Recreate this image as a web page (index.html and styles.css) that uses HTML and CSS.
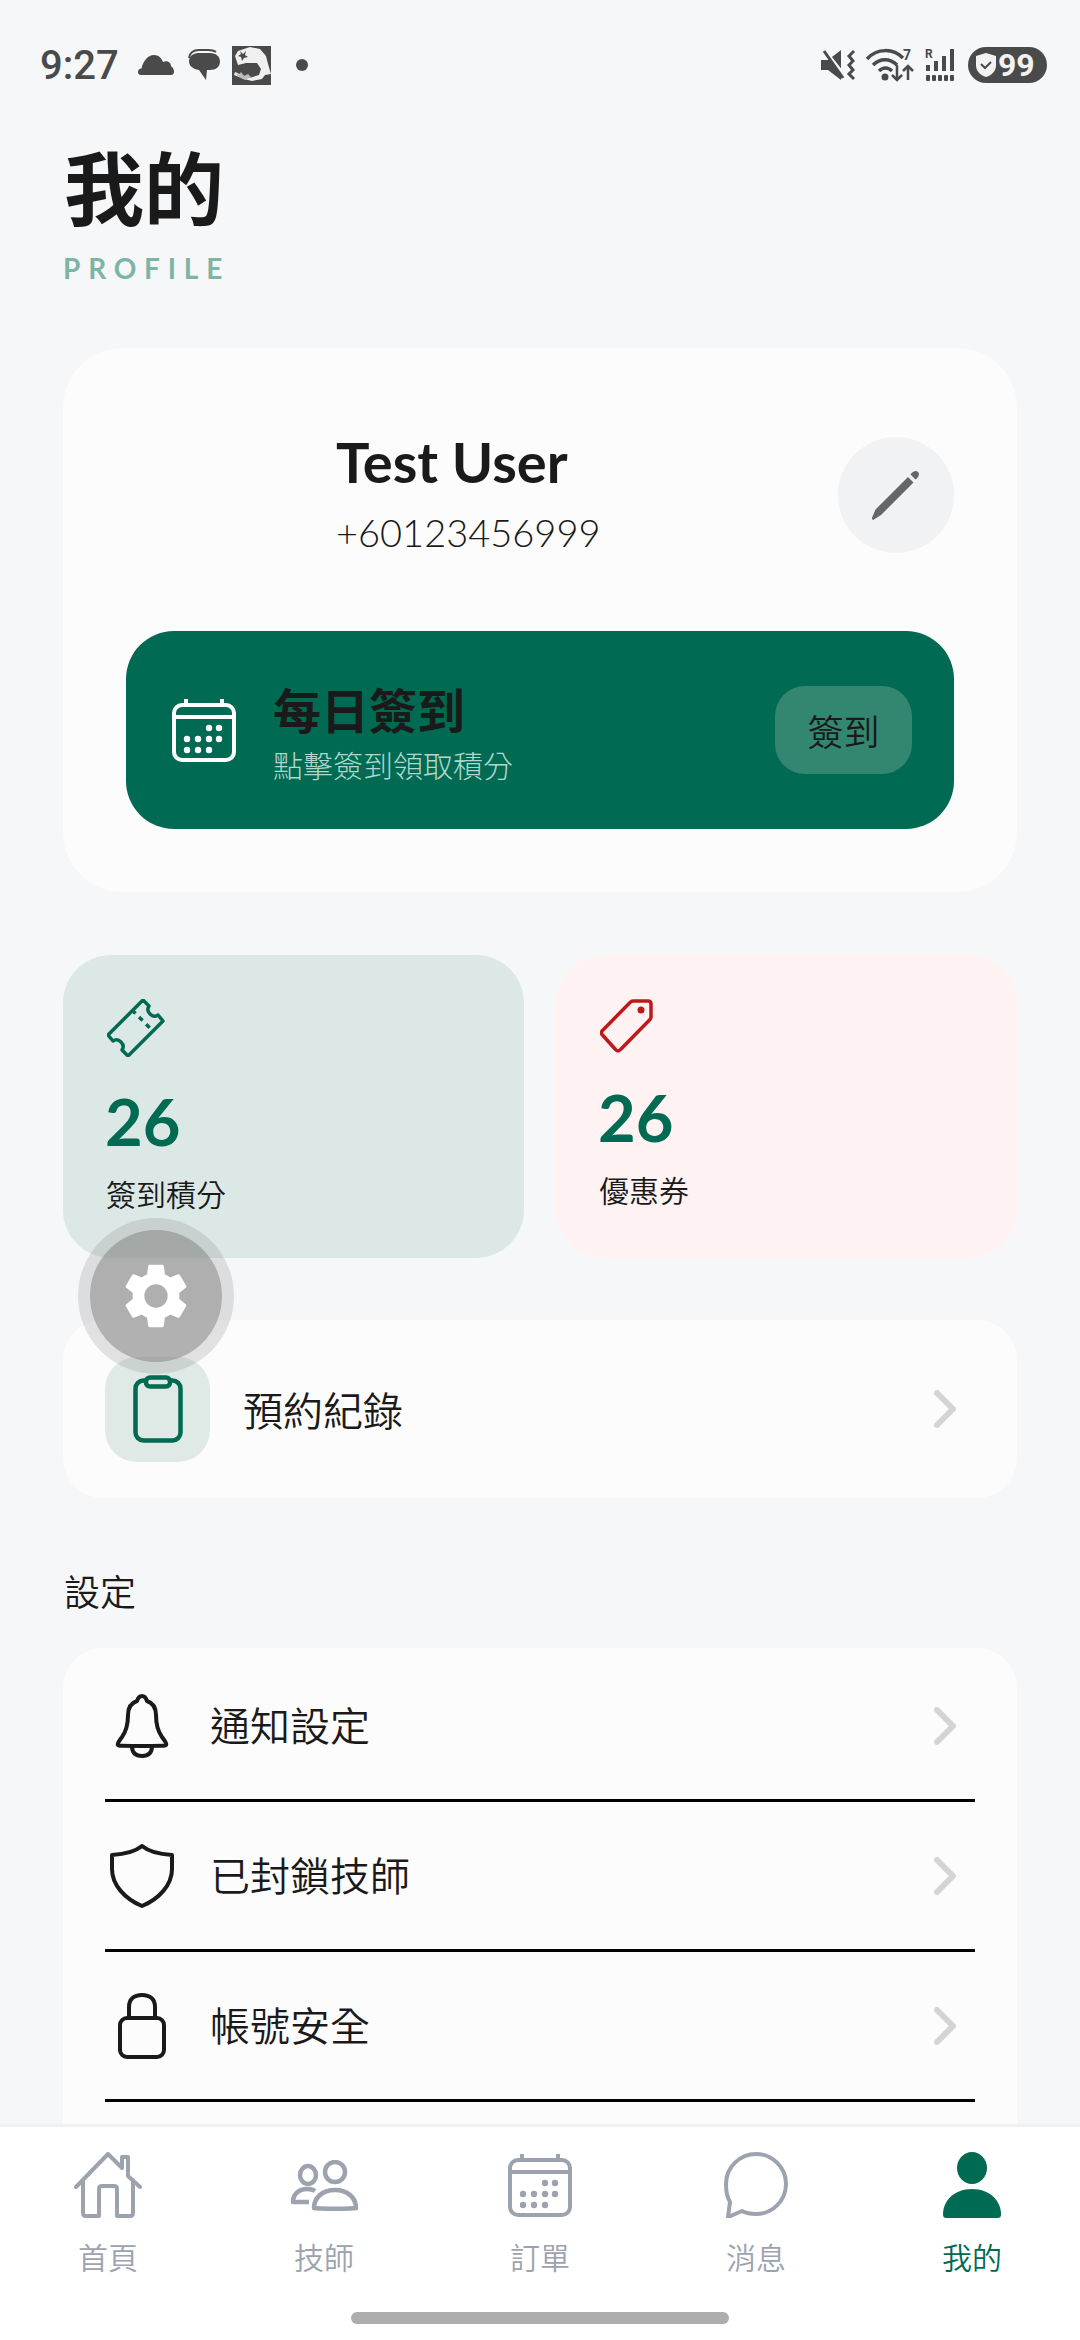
FILE: index.html
```html
<!DOCTYPE html>
<html lang="zh-Hant">
<head>
  <meta charset="UTF-8" />
  <meta name="viewport" content="width=device-width, initial-scale=1.0" />
  <title>我的</title>
  <link rel="stylesheet" href="styles.css">
</head>
<body>
  <div class="statusbar">
    <div class="status-left">
      <span class="time">9:27</span>
      <svg class="st-cloud" width="36" height="20" viewBox="0 0 36 20"><path fill="#4a4a4a" d="M3 20C1 20 0 18.600 0 17c0-2 1.500-3.400 3.500-3.400C5 6 10 0 16 0c4.500 0 7.500 2.800 9 7 1-.6 2-.8 3-.8 3 0 5 2.400 5.200 5.400C35 12.300 36 14.500 36 16.500 36 18.500 35 20 33 20z"/></svg>
      <svg class="st-chat" width="32" height="32" viewBox="0 0 32 32"><path fill="#4a4a4a" d="M10 4h12c6 0 10 3.500 10 8.500S28 21 22 21h-3l-1 10-7-10c-6-1-10-4-10-8.500C1 8 5 4 10 4z"/><path fill="none" stroke="#4a4a4a" stroke-width="2" d="M1 9C2 3 6 1 11 1h9c3 0 6 .5 8 2"/></svg>
      <svg class="st-pic" width="39" height="39" viewBox="0 0 39 39"><rect width="39" height="39" fill="#4a4a4a"/><path fill="#f0f0f0" d="M6 5 18 1l10 2 6 7 2 8 3 10-6 1-3 4-10 2-8-2-10-4 1-3 14 6 10-3 2-6-4-6H14l-8 2-3-9z"/><path fill="#4a4a4a" d="M8 5l3 3 3-3-1 4 3 2-4 1-2 3-1-4-3-1 3-2z"/><path fill="#bdbdbd" d="M4 26l3 3 2-3 3 4 4-2 3 3-6 3-8-4z"/></svg>
      <span class="st-dot"></span>
    </div>
    <div class="status-right">
      <svg width="35" height="32" viewBox="0 0 35 32"><path fill="#4a4a4a" d="M0 11h7L20 1v30L7 21H0z"/><path stroke="#f6f7f9" stroke-width="3" d="M2 -1 24 27"/><path stroke="#4a4a4a" stroke-width="3" d="M3 2l19 27"/><path fill="none" stroke="#4a4a4a" stroke-width="3" d="M33 2l-5 5 4 5-4 4 4 5-4 4 5 5"/></svg>
      <svg width="49" height="36" viewBox="0 0 49 36"><path fill="none" stroke="#4a4a4a" stroke-width="3.500" d="M1 12C11 1 27 1 37 11M7 18c7-7 17-7 24 0M13 24c4-4 9-4 13 0"/><circle cx="19" cy="30" r="3.500" fill="#4a4a4a"/><path fill="none" stroke="#4a4a4a" stroke-width="2.500" d="M31 18v15M26 28l5 5 5-5M42 33V19M37 24l5-5 5 5"/><text x="37" y="13" class="st-tiny">7</text></svg>
      <svg width="30" height="34" viewBox="0 0 30 34"><text x="0" y="10" class="st-r">R</text><g fill="#4a4a4a"><rect x="1" y="17" width="4" height="6"/><rect x="9" y="13" width="4" height="10"/><rect x="17" y="8" width="4" height="15"/><rect x="25" y="1" width="4" height="22"/><rect x="1" y="27" width="4" height="6" rx="1"/><rect x="7" y="27" width="4" height="6" rx="1"/><rect x="13" y="27" width="4" height="6" rx="1"/><rect x="19" y="27" width="4" height="6" rx="1"/><rect x="25" y="27" width="4" height="6" rx="1"/></g></svg>
      <div class="battery">
        <svg width="20" height="24" viewBox="0 0 20 24"><path fill="#f2f2f2" d="M10 0l10 3v9c0 6-4 10-10 12C4 22 0 18 0 12V3z"/><path fill="none" stroke="#4a4a4a" stroke-width="2" d="M5 11l4 4 6-6"/></svg>
        <span>99</span>
      </div>
    </div>
  </div>

  <div class="content">
    <h1 class="title">我的</h1>
    <div class="subtitle">PROFILE</div>

    <div class="card profile-card">
      <div class="profile-row">
        <div class="avatar"></div>
        <div class="profile-info">
          <div class="name">Test User</div>
          <div class="phone">+60123456999</div>
        </div>
        <div class="edit-btn">
          <svg width="52" height="52" viewBox="0 0 52 52"><path fill="#666" d="M2.500 50.500c-.6-.6-.6-1.300-.4-2l3.400-8L38 8l5.500 5.500L11 46l-7.500 4.800c-.4.200-.6 0-1-.3z"/><path fill="#666" d="M40.500 5.500c2-3 5.500-4.500 7.500-2.500s.5 5.500-2.500 7.500z"/></svg>
        </div>
      </div>
      <div class="checkin">
        <svg class="checkin-icon" width="64" height="64" viewBox="0 0 64 64"><use href="#cal-shape"/></svg>
        <div class="checkin-text">
          <div class="checkin-title">每日簽到</div>
          <div class="checkin-sub">點擊簽到領取積分</div>
        </div>
        <div class="checkin-btn">簽到</div>
      </div>
    </div>

    <div class="stats">
      <div class="stat stat-green">
        <svg width="58" height="58" viewBox="0 0 58 58"><path fill="none" stroke="#006a52" stroke-width="3.500" stroke-linejoin="round" d="M36 1l6 6c-2 3-1 6 1 8s5 3 8 1l5 6-35 35-6-6c2-3 1-6-1-8s-5-3-8-1l-5-6z"/><path fill="none" stroke="#006a52" stroke-width="3.500" stroke-dasharray="5 5" d="M25 11l19 19"/></svg>
        <div class="stat-num">26</div>
        <div class="stat-label">簽到積分</div>
      </div>
      <div class="stat stat-red">
        <svg width="54" height="54" viewBox="0 0 54 54"><path fill="none" stroke="#c01818" stroke-width="3.500" stroke-linejoin="round" d="M33 2h15c2 0 3 1 3 3v13c0 1-.3 1.500-1 2.500L21 50c-2 2.500-4 2.500-5.500.5L2.500 36c-1.500-1.500-1.500-3 0-4.500L30 3.500c1-1 2-1.500 3-1.500z"/><circle cx="41" cy="11" r="3.500" fill="#c01818"/></svg>
        <div class="stat-num">26</div>
        <div class="stat-label">優惠券</div>
      </div>
    </div>

    <div class="card booking-row">
      <div class="booking-icon">
        <svg width="50" height="68" viewBox="0 0 50 68"><rect x="2.500" y="5.500" width="45" height="60" rx="8" fill="none" stroke="#006a52" stroke-width="4.500"/><rect x="13" y="2.500" width="24" height="9" rx="4" fill="#dfeae7" stroke="#006a52" stroke-width="4.500"/></svg>
      </div>
      <div class="row-label booking-label">預約紀錄</div>
      <svg class="chevron" width="22" height="38" viewBox="0 0 22 38"><path fill="none" stroke="#d4d4d4" stroke-width="6" stroke-linecap="round" stroke-linejoin="round" d="M3 3l16 16L3 35"/></svg>
    </div>

    <div class="section-title">設定</div>

    <div class="card settings">
      <div class="setting-row">
        <div class="setting-icon">
          <svg width="54" height="64" viewBox="0 0 54 64"><path fill="none" stroke="#1a1a1a" stroke-width="4" stroke-linejoin="round" d="M27 2c3 0 4 2 5 5 6 2 9 7 9 14 0 8 1 15 6 22 3 4 5 7 4 8-1 1-3 1-24 1S4 52 3 51c-1-1 1-4 4-8 5-7 6-14 6-22 0-7 3-12 9-14 1-3 2-5 5-5z"/><path fill="none" stroke="#1a1a1a" stroke-width="4" d="M17 52c0 7 4 10 10 10s10-3 10-10"/></svg>
        </div>
        <div class="row-label">通知設定</div>
        <svg class="chevron" width="22" height="38" viewBox="0 0 22 38"><path fill="none" stroke="#d4d4d4" stroke-width="6" stroke-linecap="round" stroke-linejoin="round" d="M3 3l16 16L3 35"/></svg>
      </div>
      <div class="setting-row">
        <div class="setting-icon">
          <svg width="64" height="64" viewBox="0 0 64 64"><path fill="none" stroke="#1a1a1a" stroke-width="4" stroke-linejoin="round" d="M32 2c6 5 15 8 30 9v14c0 16-13 30-30 37C15 55 2 41 2 25V11c15-1 24-4 30-9z"/></svg>
        </div>
        <div class="row-label">已封鎖技師</div>
        <svg class="chevron" width="22" height="38" viewBox="0 0 22 38"><path fill="none" stroke="#d4d4d4" stroke-width="6" stroke-linecap="round" stroke-linejoin="round" d="M3 3l16 16L3 35"/></svg>
      </div>
      <div class="setting-row">
        <div class="setting-icon">
          <svg width="48" height="66" viewBox="0 0 48 66"><rect x="2" y="25" width="44" height="39" rx="7" fill="none" stroke="#1a1a1a" stroke-width="4"/><path fill="none" stroke="#1a1a1a" stroke-width="4" d="M11 25V14C11 6 16 2 24 2s13 4 13 12v11"/></svg>
        </div>
        <div class="row-label">帳號安全</div>
        <svg class="chevron" width="22" height="38" viewBox="0 0 22 38"><path fill="none" stroke="#d4d4d4" stroke-width="6" stroke-linecap="round" stroke-linejoin="round" d="M3 3l16 16L3 35"/></svg>
      </div>
    </div>
  </div>

  <div class="float-btn">
    <div class="float-inner">
      <svg width="78" height="80" viewBox="0 0 24 24"><path fill="#fff" fill-rule="evenodd" d="M19.140 12.940c.040-.300.060-.610.060-.940 0-.320-.020-.640-.070-.940l2.030-1.580a.490.490 0 0 0 .120-.610l-1.920-3.320a.488.488 0 0 0-.590-.220l-2.390.960c-.500-.380-1.030-.700-1.620-.940l-.360-2.540a.484.484 0 0 0-.480-.410h-3.840c-.240 0-.430.170-.470.410l-.360 2.540c-.590.240-1.130.570-1.620.940l-2.390-.960c-.220-.080-.470 0-.590.220L2.740 8.870c-.120.210-.080.470.120.610l2.030 1.580c-.050.300-.090.630-.090.940s.020.640.070.940l-2.030 1.580a.490.490 0 0 0-.120.610l1.920 3.320c.120.220.370.290.590.220l2.390-.960c.500.380 1.030.700 1.620.940l.360 2.540c.050.240.240.410.480.410h3.840c.240 0 .440-.170.470-.410l.360-2.540c.590-.240 1.130-.560 1.620-.940l2.390.960c.220.080.470 0 .590-.220l1.920-3.320c.120-.220.070-.470-.120-.610l-2.010-1.580zM12 15.600A3.600 3.600 0 1 1 12 8.400a3.600 3.600 0 0 1 0 7.200z"/></svg>
    </div>
  </div>

  <div class="tabbar">
    <div class="tab">
      <svg width="68" height="66" viewBox="0 0 68 66"><path fill="none" stroke="#9ca3af" stroke-width="4" stroke-linejoin="round" stroke-linecap="round" d="M2 35L34 2l14 14V5h6v19l12 11M9 28v33c0 2 1 3 3 3h13V37c0-2 1-3 3-3h12c2 0 3 1 3 3v27h13c2 0 3-1 3-3V28"/></svg>
      <span>首頁</span>
    </div>
    <div class="tab">
      <svg class="people" width="68" height="52" viewBox="0 0 68 52"><ellipse cx="18" cy="15" rx="8" ry="9" fill="none" stroke="#9ca3af" stroke-width="4.500"/><ellipse cx="45" cy="12" rx="10" ry="10" fill="none" stroke="#9ca3af" stroke-width="4.500"/><path fill="none" stroke="#9ca3af" stroke-width="4.500" stroke-linejoin="round" d="M19 42H3c0-8 6-13 14-13 3 0 6 .5 8 2"/><path fill="none" stroke="#9ca3af" stroke-width="4.500" stroke-linejoin="round" d="M24 48c0-10 8-18 21-18s21 8 21 18c-4 1-38 1-42 0z"/></svg>
      <span>技師</span>
    </div>
    <div class="tab">
      <svg width="64" height="66" viewBox="0 0 64 64"><use href="#cal-gray"/></svg>
      <span>訂單</span>
    </div>
    <div class="tab">
      <svg width="64" height="66" viewBox="0 0 64 66"><path fill="none" stroke="#9ca3af" stroke-width="4" stroke-linejoin="round" d="M32 2c16 0 30 13 30 30S48 62 32 62c-6 0-10-1-14-3L4 65l2-15C3 45 2 39 2 32 2 15 16 2 32 2z"/></svg>
      <span>消息</span>
    </div>
    <div class="tab tab-active">
      <svg width="58" height="66" viewBox="0 0 58 66"><ellipse cx="29" cy="16" rx="15" ry="16" fill="#006a52"/><path fill="#006a52" d="M0 62C0 50 10 37 29 37s29 13 29 25c0 3-1 4-4 4H4c-3 0-4-1-4-4z"/></svg>
      <span>我的</span>
    </div>
    <div class="home-bar"></div>
  </div>

  <svg class="defs" width="0" height="0">
    <defs>
      <g id="cal-shape" fill="none" stroke="#fff" stroke-width="4">
        <rect x="2" y="7" width="60" height="55" rx="8"/>
        <path d="M2 19h60M14 1v6M50 1v6"/>
        <g fill="#fff" stroke="none">
          <circle cx="37" cy="30" r="3.200"/><circle cx="47" cy="30" r="3.200"/>
          <circle cx="15" cy="41" r="3.200"/><circle cx="26" cy="41" r="3.200"/><circle cx="37" cy="41" r="3.200"/><circle cx="47" cy="41" r="3.200"/>
          <circle cx="15" cy="52" r="3.200"/><circle cx="26" cy="52" r="3.200"/><circle cx="37" cy="52" r="3.200"/>
        </g>
      </g>
      <g id="cal-gray" fill="none" stroke="#9ca3af" stroke-width="4">
        <rect x="2" y="7" width="60" height="55" rx="8"/>
        <path d="M2 19h60M14 1v6M50 1v6"/>
        <g fill="#9ca3af" stroke="none">
          <circle cx="37" cy="30" r="3.200"/><circle cx="47" cy="30" r="3.200"/>
          <circle cx="15" cy="41" r="3.200"/><circle cx="26" cy="41" r="3.200"/><circle cx="37" cy="41" r="3.200"/><circle cx="47" cy="41" r="3.200"/>
          <circle cx="15" cy="52" r="3.200"/><circle cx="26" cy="52" r="3.200"/><circle cx="37" cy="52" r="3.200"/>
        </g>
      </g>
    </defs>
  </svg>
</body>
</html>
```

FILE: styles.css
```css
* {
  box-sizing: border-box;
}
html, body {
  margin: 0;
  padding: 0;
}
body {
  position: relative;
  width: 1080px;
  height: 2340px;
  overflow: hidden;
  display: flex;
  flex-direction: column;
  background-color: #f6f7f9;
  color: #1a1a1a;
  font-family: Lato, "Noto Sans CJK TC", sans-serif;
}
.defs {
  position: absolute;
}

/* status bar */
.statusbar {
  height: 130px;
  flex: none;
  padding: 0 33px 0 40px;
  display: flex;
  align-items: center;
  justify-content: space-between;
}
.status-left,
.status-right {
  display: flex;
  align-items: center;
}
.status-right {
  gap: 10px;
}
.time {
  font-family: Roboto, sans-serif;
  font-size: 40px;
  font-weight: 500;
  color: #4a4a4a;
}
.st-cloud {
  margin-left: 19px;
}
.st-chat {
  margin-left: 14px;
}
.st-pic {
  margin-left: 12px;
}
.st-dot {
  width: 12px;
  height: 12px;
  margin-left: 25px;
  border-radius: 50%;
  background-color: #4a4a4a;
}
.st-tiny {
  font-family: Roboto, sans-serif;
  font-size: 14px;
  font-weight: 700;
  fill: #4a4a4a;
}
.st-r {
  font-family: Roboto, sans-serif;
  font-size: 12px;
  font-weight: 700;
  fill: #4a4a4a;
}
.battery {
  width: 79px;
  height: 36px;
  margin-left: 3px;
  padding-left: 8px;
  border-radius: 18px;
  background-color: #4a4a4a;
  display: flex;
  align-items: center;
  gap: 2px;
  color: #f2f2f2;
  font-family: Roboto, sans-serif;
  font-size: 32px;
  font-weight: 700;
}

/* page */
.content {
  flex: 1;
  min-height: 0;
  overflow: hidden;
  padding: 0 63px;
}
.title {
  margin: 12px 0 0 1px;
  font-size: 80px;
  font-weight: 700;
  line-height: 92px;
}
.subtitle {
  margin-top: 17px;
  color: #7db5a5;
  font-size: 28px;
  font-weight: 700;
  line-height: 34px;
  letter-spacing: 7.8px;
}
.card {
  background-color: #fcfcfc;
}
.profile-card {
  margin-top: 63px;
  padding: 63px;
  border-radius: 60px;
}
.profile-row {
  display: flex;
  align-items: center;
}
.avatar {
  width: 168px;
  height: 168px;
  margin-right: 42px;
}
.profile-info {
  flex: 1;
  padding-bottom: 4px;
}
.name {
  font-size: 56px;
  font-weight: 700;
  line-height: 66px;
}
.phone {
  margin-top: 12px;
  font-size: 38px;
  font-weight: 300;
  line-height: 50px;
}
.edit-btn {
  width: 116px;
  height: 116px;
  border-radius: 50%;
  background-color: #f1f2f4;
  display: flex;
  align-items: center;
  justify-content: center;
}
.checkin {
  height: 198px;
  margin-top: 52px;
  padding: 0 42px 0 46px;
  border-radius: 48px;
  background-color: #006a52;
  display: flex;
  align-items: center;
}
.checkin-icon {
  flex: none;
}
.checkin-text {
  flex: 1;
  margin-left: 37px;
  padding-top: 7px;
}
.checkin-title {
  font-size: 48px;
  font-weight: 700;
  line-height: 56px;
}
.checkin-sub {
  margin-top: 7px;
  color: #b0d8cc;
  font-size: 30px;
  font-weight: 300;
  line-height: 38px;
}
.checkin-btn {
  width: 137px;
  height: 88px;
  border-radius: 30px;
  background-color: #338770;
  display: flex;
  align-items: center;
  justify-content: center;
  font-size: 36px;
  font-weight: 350;
}

/* points and coupons */
.stats {
  margin-top: 63px;
  display: flex;
  gap: 32px;
}
.stat {
  flex: 1;
  height: 303px;
  padding: 44px;
  border-radius: 48px;
}
.stat svg {
  display: block;
}
.stat-num {
  margin-top: 23px;
  margin-left: -2px;
  color: #006a52;
  font-size: 65px;
  font-weight: 700;
  line-height: 82px;
}
.stat-green {
  background-color: #dce8e5;
}
.stat-red {
  background-color: #fff2f2;
}
.stat-label {
  margin-top: 12px;
  margin-left: -1px;
  font-size: 30px;
  font-weight: 350;
  line-height: 40px;
}

/* rows */
.booking-row {
  height: 178px;
  margin-top: 62px;
  padding: 0 61px 0 42px;
  border-radius: 40px;
  display: flex;
  align-items: center;
}
.booking-icon {
  width: 105px;
  height: 105px;
  margin-right: 33px;
  border-radius: 32px;
  background-color: #dfeae7;
  display: flex;
  align-items: center;
  justify-content: center;
}
.row-label {
  flex: 1;
  font-size: 40px;
  font-weight: 350;
  line-height: 54px;
}
.booking-label {
  padding-top: 4px;
}
.section-title {
  margin: 69px 0 31px 1px;
  font-size: 36px;
  font-weight: 350;
  line-height: 50px;
}
.settings {
  padding: 4px 42px 60px;
  border-radius: 40px;
}
.setting-row {
  height: 150px;
  padding-right: 19px;
  border-bottom: 3px solid #000;
  display: flex;
  align-items: center;
}
.setting-icon {
  width: 105px;
  display: flex;
  justify-content: center;
  margin-left: -16px;
  margin-right: 16px;
}

/* floating shortcut */
.float-btn {
  position: absolute;
  left: 78px;
  top: 1218px;
  width: 156px;
  height: 156px;
  padding: 12px;
  border-radius: 50%;
  background-color: rgba(120, 120, 120, 0.2);
}
.float-inner {
  width: 132px;
  height: 132px;
  border-radius: 50%;
  background-color: rgba(120, 120, 120, 0.45);
  display: flex;
  align-items: center;
  justify-content: center;
}

/* bottom tabs */
.tabbar {
  position: relative;
  height: 216px;
  flex: none;
  padding-top: 25px;
  border-top: 3px solid #f0f1f3;
  background-color: #fff;
  display: flex;
  align-items: flex-start;
}
.tab {
  flex: 1;
  height: 123px;
  display: flex;
  flex-direction: column;
  align-items: center;
  justify-content: space-between;
  color: #9ca3af;
  font-size: 30px;
  font-weight: 350;
  line-height: 36px;
}
.people {
  margin-top: 8px;
}
.tab-active {
  color: #006a52;
}
.home-bar {
  position: absolute;
  left: 351px;
  bottom: 16px;
  width: 378px;
  height: 12px;
  border-radius: 6px;
  background-color: #adadad;
}
```
